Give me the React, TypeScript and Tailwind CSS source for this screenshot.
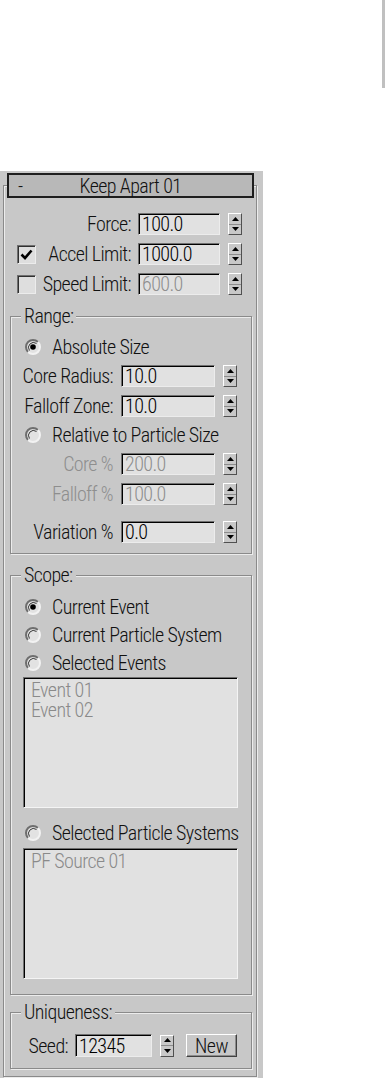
import React from 'react';

const Spinner = ({ className = '' }: { className?: string }) => (
    <div className={`w-[14px] h-[22px] flex flex-col border border-t-white border-l-white border-b-[#505050] border-r-[#505050] bg-[#c8c8c8] ${className}`}>
        <div className="flex-1 flex items-center justify-center border-b border-[#8c8c8c]">
            <svg width="7" height="4" viewBox="0 0 7 4"><polygon points="3.5,0 7,4 0,4" fill="#000" /></svg>
        </div>
        <div className="flex-1 flex items-center justify-center">
            <svg width="7" height="4" viewBox="0 0 7 4"><polygon points="0,0 7,0 3.5,4" fill="#000" /></svg>
        </div>
    </div>
);

const Field = ({ value, disabled, className = '' }: { value: string; disabled?: boolean; className?: string }) => (
    <div className={`h-[22px] flex items-center pl-[3px] bg-[#e1e1e1] border border-t-[#707070] border-l-[#707070] border-b-[#ececec] border-r-[#ececec] shadow-[inset_1px_1px_0_#000] ${disabled ? 'text-[#8e8e8e]' : 'text-black'} ${className}`}>
        {value}
    </div>
);

const Checkbox = ({ checked, className = '' }: { checked?: boolean; className?: string }) => (
    <div className={`w-[19px] h-[19px] bg-[#dedede] border border-t-[#707070] border-l-[#707070] border-b-[#ececec] border-r-[#ececec] shadow-[inset_1px_1px_0_#303030] flex items-center justify-center ${className}`}>
        {checked && (
            <svg width="13" height="11" viewBox="0 0 13 11">
                <path d="M1.5 5.5 L5 9 L11.5 1.5" fill="none" stroke="#000" strokeWidth="2.6" />
            </svg>
        )}
    </div>
);

const Radio = ({ checked, className = '' }: { checked?: boolean; className?: string }) => (
    <svg width="16" height="16" viewBox="0 0 16 16" className={className}>
        <circle cx="8" cy="8" r="7" fill="#e2e2e2" />
        <path d="M3.05 12.95 A7 7 0 0 1 12.95 3.05" fill="none" stroke="#6e6e6e" strokeWidth="2" />
        <path d="M4.5 11.5 A5 5 0 0 1 11.5 4.5" fill="none" stroke="#3a3a3a" strokeWidth="1" />
        <path d="M12.95 3.05 A7 7 0 0 1 3.05 12.95" fill="none" stroke="#f2f2f2" strokeWidth="2" />
        {checked && <circle cx="8" cy="8" r="2.8" fill="#000" />}
    </svg>
);

const Group = ({ title, className = '', children }: { title: string; className?: string; children: React.ReactNode }) => (
    <div className={`relative ml-[6px] w-[242px] border border-[#8a8a8a] shadow-[inset_1px_1px_0_#ececec,1px_1px_0_#ececec] ${className}`}>
        <span className="absolute left-[10px] -top-[12px] px-[3px] h-[22px] flex items-center bg-[#c8c8c8]">{title}</span>
        {children}
    </div>
);

const RangeRow = ({ label, value, disabled, className = '' }: { label: string; value: string; disabled?: boolean; className?: string }) => (
    <div className={`flex items-center h-[22px] ${className}`}>
        <span className={`w-[102px] text-right ${disabled ? 'text-[#8e8e8e]' : ''}`}>{label}</span>
        <Field value={value} disabled={disabled} className="ml-[8px] w-[94px]" />
        <Spinner className="ml-[8px]" />
    </div>
);

const RadioRow = ({ label, checked, className = '' }: { label: string; checked?: boolean; className?: string }) => (
    <div className={`flex items-center h-[22px] ${className}`}>
        <Radio checked={checked} className="ml-[14px]" />
        <span className="ml-[11px]">{label}</span>
    </div>
);

const ListBox = ({ items, className = '' }: { items: string[]; className?: string }) => (
    <div className={`ml-[12px] w-[215px] h-[131px] bg-[#e1e1e1] border border-t-[#707070] border-l-[#707070] border-b-[#f4f4f4] border-r-[#f4f4f4] shadow-[inset_1px_1px_0_#000] pl-[7px] pt-[2px] text-[#8a8a8a] leading-[20px] ${className}`}>
        {items.map(i => <div key={i}>{i}</div>)}
    </div>
);

const TopRow = ({ label, value, check, checked, disabled, className = '' }: { label: string; value: string; check?: boolean; checked?: boolean; disabled?: boolean; className?: string }) => (
    <div className={`flex items-center h-[22px] ${className}`}>
        <div className="w-[127px] flex items-center">
            {check && <Checkbox checked={checked} className="ml-[13px]" />}
            <span className="ml-auto">{label}</span>
        </div>
        <Field value={value} disabled={disabled} className="ml-[7px] w-[82px]" />
        <Spinner className="ml-[8px]" />
    </div>
);

export default function App() {
    return (
        <div className="w-[385px] h-[1081px] bg-white text-[#111] text-[20px] font-light tracking-[-0.6px] leading-none font-['Roboto_Condensed','Liberation_Sans',sans-serif]">
            <div className="h-[171px] flex justify-end">
                <div className="w-[3px] h-[88px] bg-[#c0c0c0]" />
            </div>
            <div className="relative w-[263px] bg-[#c8c8c8] pt-[14px] pb-[1px]">
                <div className="absolute left-[7px] top-[2px] w-[247px] h-[25px] bg-[#b8b8b8] border-2 border-[#1e1e1e] flex items-center justify-center">
                    <span className="absolute left-[9px]">-</span>
                    <span>Keep Apart 01</span>
                </div>
                <div className="ml-[3px] w-[254px] border border-[#8a8a8a] shadow-[inset_1px_1px_0_#ececec,1px_1px_0_#ececec] pb-[7px]">
                    <TopRow label="Force:" value="100.0" className="mt-[27px]" />
                    <TopRow label="Accel Limit:" value="1000.0" check checked className="mt-[8px]" />
                    <TopRow label="Speed Limit:" value="600.0" check disabled className="mt-[8px]" />

                    <Group title="Range:" className="mt-[21px] pb-[10px]">
                        <RadioRow label="Absolute Size" checked className="mt-[19px]" />
                        <RangeRow label="Core Radius:" value="10.0" className="mt-[7px]" />
                        <RangeRow label="Falloff Zone:" value="10.0" className="mt-[8px]" />
                        <RadioRow label="Relative to Particle Size" className="mt-[7px]" />
                        <RangeRow label="Core %" value="200.0" disabled className="mt-[7px]" />
                        <RangeRow label="Falloff %" value="100.0" disabled className="mt-[8px]" />
                        <RangeRow label="Variation %" value="0.0" className="mt-[16px]" />
                    </Group>

                    <Group title="Scope:" className="mt-[21px] pb-[15px]">
                        <RadioRow label="Current Event" checked className="mt-[20px]" />
                        <RadioRow label="Current Particle System" className="mt-[6px]" />
                        <RadioRow label="Selected Events" className="mt-[6px]" />
                        <ListBox items={['Event 01', 'Event 02']} className="mt-[3px]" />
                        <RadioRow label="Selected Particle Systems" className="mt-[14px]" />
                        <ListBox items={['PF Source 01']} className="mt-[4px]" />
                    </Group>

                    <Group title="Uniqueness:" className="mt-[17px] pb-[11px]">
                        <div className="flex items-center h-[23px] mt-[21px]">
                            <span className="w-[57px] text-right">Seed:</span>
                            <Field value="12345" className="ml-[7px] w-[77px] !h-[23px]" />
                            <Spinner className="ml-[8px]" />
                            <button className="ml-[12px] w-[51px] h-[23px] bg-[#c8c8c8] border border-t-white border-l-white border-b-[#404040] border-r-[#404040] shadow-[inset_-1px_-1px_0_#8c8c8c] flex items-center justify-center">
                                New
                            </button>
                        </div>
                    </Group>
                </div>
            </div>
        </div>
    );
}
